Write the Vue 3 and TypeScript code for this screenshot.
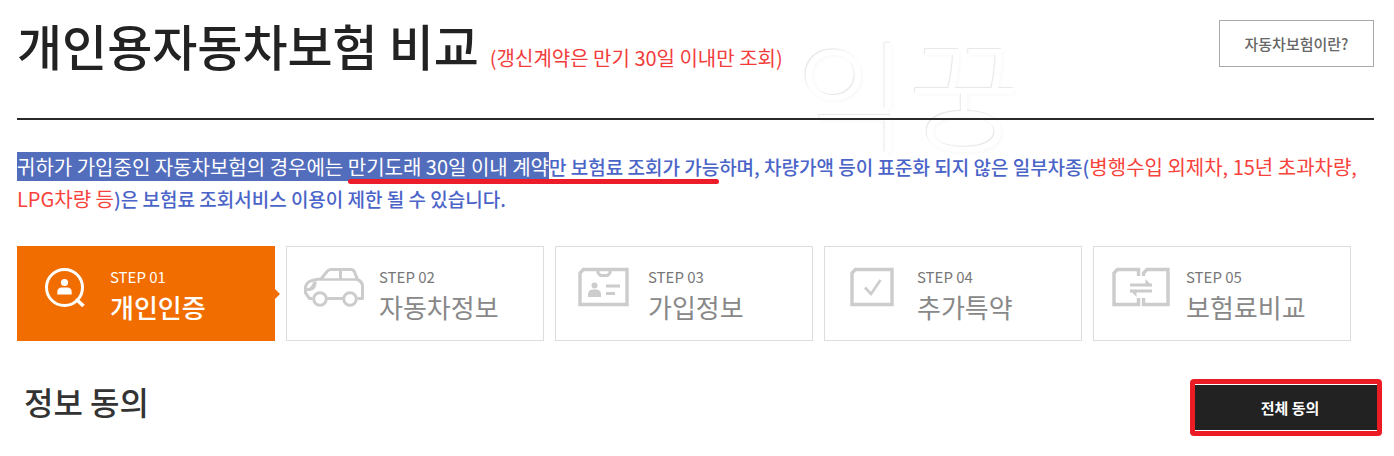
<script setup lang="ts">
interface Step {
  no: string
  title: string
  icon: 'person' | 'car' | 'card' | 'check' | 'compare'
}

const steps: Step[] = [
  { no: 'STEP 01', title: '개인인증', icon: 'person' },
  { no: 'STEP 02', title: '자동차정보', icon: 'car' },
  { no: 'STEP 03', title: '가입정보', icon: 'card' },
  { no: 'STEP 04', title: '추가특약', icon: 'check' },
  { no: 'STEP 05', title: '보험료비교', icon: 'compare' },
]
const current = 0
</script>

<template>
  <main class="page">
    <header class="head">
      <span class="watermark" aria-hidden="true">익꿍</span>
      <h1 class="title">
        개인용자동차보험 비교
        <small class="title-note">(갱신계약은 만기 30일 이내만 조회)</small>
      </h1>
      <button type="button" class="about">자동차보험이란?</button>
    </header>

    <p class="notice">
      <span class="picked">귀하가 가입중인 자동차보험의 경우에는 </span><span class="marked"><span class="picked">만기도래 30일 이내 계약</span>만 보험료 조회가 가능</span>하며, 차량가액 등이 표준화 되지 않은 일부차종(<em class="warn">병행수입 외제차, 15년 초과차량, LPG차량 등</em>)은 보험료 조회서비스 이용이 제한 될 수 있습니다.
    </p>

    <ol class="steps">
      <li v-for="(step, i) in steps" :key="step.no" class="step" :class="{ active: i === current }">
        <span class="icon">
          <svg v-if="step.icon === 'person'" width="40" height="40" viewBox="0 0 40 40" fill="none" stroke="currentColor">
            <circle cx="19.5" cy="20.5" r="18" stroke-width="3" />
            <path d="M31 32l7.500 7" stroke-width="3.600" />
            <circle cx="19.5" cy="15.5" r="3.600" fill="currentColor" stroke="none" />
            <path d="M12.300 27.500v-2.500q0-4.500 4.500-4.500h5.400q4.500 0 4.500 4.500v2.500z" fill="currentColor" stroke="none" />
          </svg>
          <svg v-else-if="step.icon === 'car'" width="62" height="40" viewBox="0 0 62 40" fill="none" stroke="currentColor" stroke-width="3" stroke-linejoin="round">
            <path d="M9.500 31.500H6.500L2.500 26V21q0-4 4-6.500 4-2 11.500-2.500l6-7.500q1.500-2 4-2h20q2.500 0 3.500 2.500l3 7.500q5 2 5 7v12H54.500" />
            <path d="M18 12.500h37" stroke-width="2.400" />
            <path d="M37.500 3v9" />
            <path d="M3.500 22.500q6 0 8-8M4 22.500q8 2 8.500-8" stroke-width="2.400" />
            <circle cx="17" cy="32" r="6.300" />
            <circle cx="47" cy="32" r="6.300" />
            <path d="M24 31.500h16" />
          </svg>
          <svg v-else-if="step.icon === 'card'" width="51" height="40" viewBox="0 0 51 40" fill="none" stroke="currentColor">
            <path d="M5.500 2.500H49v35H2V6z" stroke-width="3.400" />
            <path d="M20 3v3l2.500 2.500h7L32 6V3" stroke-width="3" />
            <circle cx="16.500" cy="18.500" r="3" fill="currentColor" stroke="none" />
            <path d="M10 30v-2.500q0-4.500 4.500-5h4q4.500.5 4.500 5V30z" fill="currentColor" stroke="none" />
            <path d="M28 19h14M28 26.500h9" stroke-width="3" />
          </svg>
          <svg v-else-if="step.icon === 'check'" width="44" height="40" viewBox="0 0 44 40" fill="none" stroke="currentColor">
            <path d="M5.500 2.500H42v35H2V6z" stroke-width="3.400" />
            <path d="M15 20.500l6 6.500 9.500-14" stroke-width="2.600" />
          </svg>
          <svg v-else width="58" height="40" viewBox="0 0 58 40" fill="none" stroke="currentColor">
            <path d="M26.500 9v-6.500H5.500L2 6v31.500h24.500V31M31.500 9V6l3.500-3.500h21v35H31.500V31" stroke-width="3.400" />
            <path d="M18 18h22M18 24h22" stroke-width="2.800" />
            <path d="M33.500 12l7 7.300h-7zM24.500 30l-7-7.300h7z" fill="currentColor" stroke="none" />
          </svg>
        </span>
        <span class="label">
          <span class="no">{{ step.no }}</span>
          <strong class="name">{{ step.title }}</strong>
        </span>
      </li>
    </ol>

    <section class="agree">
      <h2 class="agree-title">정보 동의</h2>
      <div class="highlight">
        <button type="button" class="agree-all">전체 동의</button>
      </div>
    </section>
  </main>
</template>

<style>
body {
  margin: 0;
  background: #fff;
}
</style>

<style scoped>
.page,
.page button {
  font-family: "Noto Sans CJK KR", "Noto Sans", sans-serif;
}

.page {
  padding: 20px 20px 20px 17px;
  color: #222;
}

.head {
  position: relative;
  display: flex;
  justify-content: space-between;
  align-items: flex-start;
  height: 98px;
  border-bottom: 2px solid #2a2a2a;
}

.watermark {
  position: absolute;
  left: 779px;
  top: 4px;
  z-index: -1;
  font-size: 122px;
  font-weight: 300;
  line-height: 132px;
  color: #fff;
  text-shadow: -1px -1px 1px #e6e6e6, 2px 2px 3px #fafafa;
}

.title {
  margin: 0;
  font-size: 49px;
  font-weight: 500;
  line-height: 49px;
  white-space: nowrap;
}

.title-note {
  font-size: 20px;
  font-weight: 400;
  color: #f23c3c;
}

.about {
  width: 155px;
  height: 47px;
  padding: 0;
  border: 1px solid #aaa;
  background: #fff;
  color: #666;
  font-size: 15px;
  font-weight: 500;
}

.notice {
  margin: 31px 0 0;
  font-size: 19px;
  font-weight: 500;
  line-height: 32px;
  color: #4a64c8;
  word-break: keep-all;
}

.picked {
  background: #536dbd;
  color: #fff;
  font-size: 20px;
  font-weight: 400;
}

.marked {
  position: relative;
  display: inline-block;
}

.marked::after {
  content: "";
  position: absolute;
  left: 0;
  right: 0;
  bottom: -1px;
  height: 5px;
  border-radius: 3px;
  background: #ec1c2b;
}

.warn {
  font-size: 20px;
  font-style: normal;
  font-weight: 400;
  color: #f8423c;
}

.steps {
  display: grid;
  grid-template-columns: repeat(5, 1fr);
  gap: 11px;
  margin: 31px 23px 0 0;
  padding: 0;
  list-style: none;
}

.step {
  position: relative;
  display: flex;
  gap: 14px;
  padding: 20px 0 14px 16px;
  border: 1px solid #ddd;
  color: #888;
}

.icon {
  display: flex;
  flex: none;
  justify-content: center;
  width: 62px;
  color: #ccc;
}

.label {
  display: flex;
  flex-direction: column;
}

.no {
  font-size: 15px;
  line-height: 20px;
  color: #777;
}

.name {
  font-size: 26px;
  font-weight: 400;
  line-height: 39px;
}

.active {
  border-color: #f26d00;
  background: #f26d00;
}

.active,
.active .icon,
.active .no {
  color: #fff;
}

.active .name {
  font-weight: 500;
}

.active::after {
  content: "";
  position: absolute;
  left: 100%;
  top: 50%;
  margin-top: -6px;
  border: 6px solid transparent;
  border-left-color: #f26d00;
  border-right-width: 0;
}

.agree {
  display: flex;
  justify-content: space-between;
  align-items: flex-start;
  margin: 38px -8px 0 7px;
}

.agree-title {
  margin: 0;
  font-size: 32px;
  font-weight: 500;
  line-height: 44px;
  color: #333;
}

.highlight {
  padding: 1px 0;
  border: 5px solid #ec1c24;
  border-radius: 4px;
}

.agree-all {
  display: block;
  width: 182px;
  height: 45px;
  padding: 0 0 0 8px;
  border: 0;
  background: #222;
  color: #fff;
  font-size: 15px;
  font-weight: 700;
}
</style>
